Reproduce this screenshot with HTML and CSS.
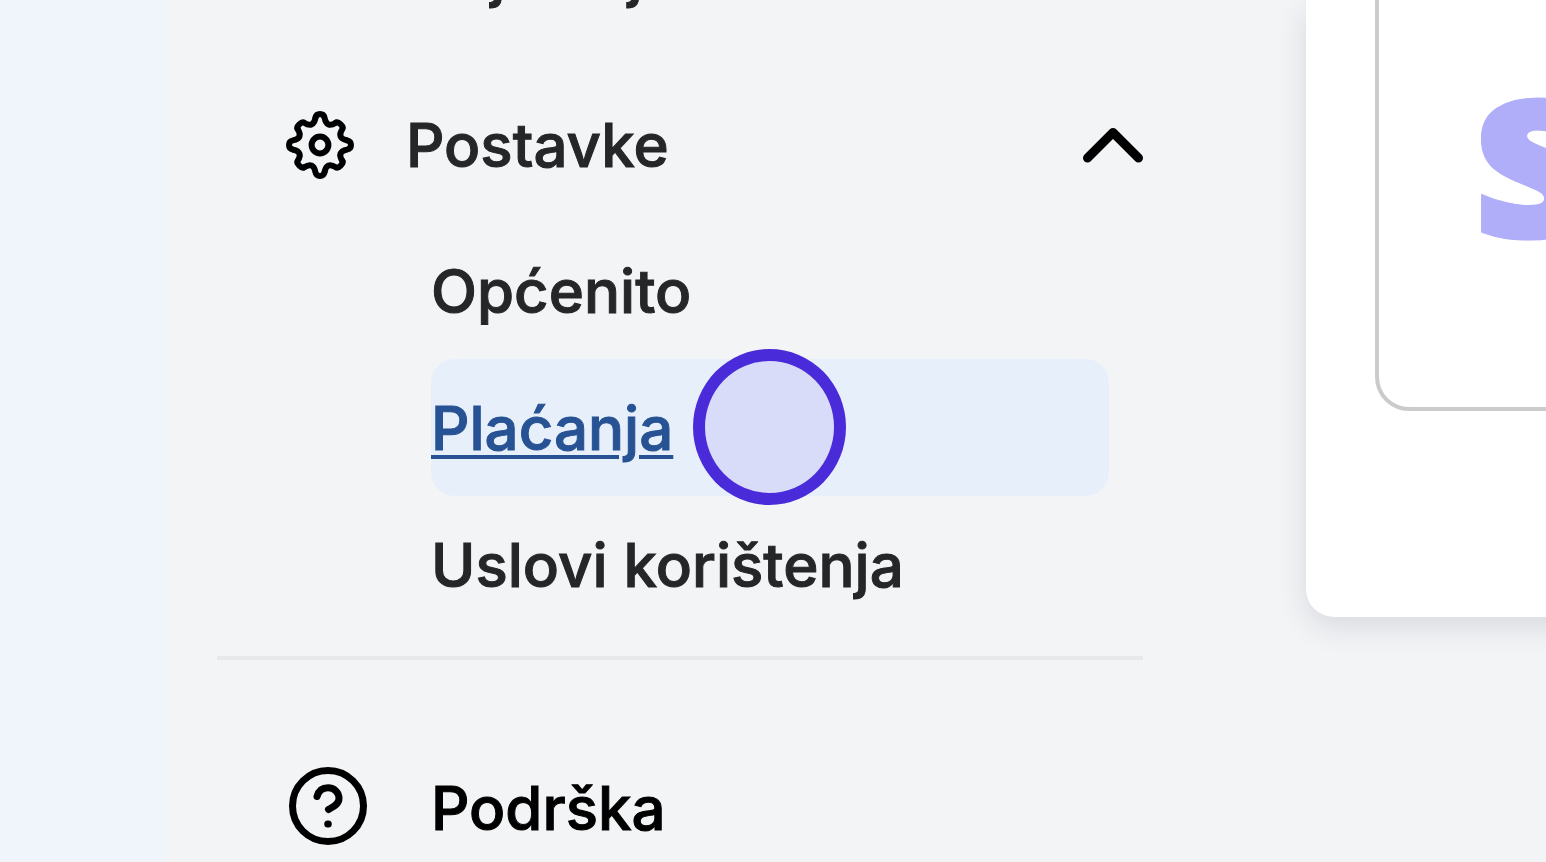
FILE: index.html
```html
<!DOCTYPE html>
<html lang="bs">
<head>
    <meta charset="UTF-8">
    <meta name="viewport" content="width=device-width, initial-scale=1.0">
    <title>Postavke</title>
    <link rel="stylesheet" href="styles.css">
</head>

<body>

<div class="page">
    <!-- Sidebar -->
    <nav class="sidebar">
        <a class="row" href="#"><span class="icon"></span>Izvještaji</a>

        <button class="row" type="button" aria-expanded="true">
            <svg class="icon" viewBox="-34 -34 68 68" aria-hidden="true">
                <defs>
                    <path id="tooth" d="M-4.6 -27C-3.6 -32.3 3.6 -32.3 4.6 -27C6 -20 9.9 -18.4 15.8 -22.3"/>
                    <path id="corner" d="M-4.6 -27C-4.2 -30 4.2 -30 4.6 -27C6 -20 9.9 -18.4 15.8 -22.3"/>
                </defs>
                <use href="#tooth"/>
                <use href="#corner" transform="rotate(45)"/>
                <use href="#tooth" transform="rotate(90)"/>
                <use href="#corner" transform="rotate(135)"/>
                <use href="#tooth" transform="rotate(180)"/>
                <use href="#corner" transform="rotate(225)"/>
                <use href="#tooth" transform="rotate(270)"/>
                <use href="#corner" transform="rotate(315)"/>
                <circle r="8.4"/>
            </svg>
            Postavke
            <svg class="chevron" viewBox="0 0 60 36" aria-hidden="true">
                <path d="M4.5 31L30 5.5L55.5 31"/>
            </svg>
        </button>

        <ul class="submenu">
            <li><a href="#">Općenito</a></li>
            <li class="active"><a href="#">Plaćanja</a><span class="pointer"></span></li>
            <li><a href="#">Uslovi korištenja</a></li>
        </ul>

        <hr>

        <a class="row support" href="#">
            <svg class="icon" viewBox="-39 -39 78 78" aria-hidden="true">
                <circle r="35.5"/>
                <path d="M-11 -9.5C-9.5 -15 -5.5 -18.2 0 -18.2C6.5 -18.2 11 -13.5 11 -7.5C11 -1.5 4.5 1 0.5 3.5"/>
                <path d="M-0.3 18H0.3"/>
            </svg>
            Podrška
        </a>
    </nav>

    <!-- Content -->
    <main class="card">
        <div class="provider"><span class="logo">s</span></div>
    </main>
</div>

</body>
</html>
```

FILE: styles.css
```css
* {
    box-sizing: border-box;
}
body {
    margin: 0;
    font-family: Inter, "Liberation Sans", sans-serif;
    font-size: 60px;
    font-weight: 500;
    line-height: 72px;
    color: #242628;
    background: #f2f4f6;
    -webkit-text-stroke: 1px;
    overflow: hidden;
}
.page {
    display: grid;
    grid-template-columns: 1141px 1fr;
    align-items: start;
    min-height: 100vh;
    border-left: 165px solid #f0f5fb;
}
/* scrolled so that the first row is almost out of view */
.sidebar {
    margin-top: -104px;
    padding: 0 163px 0 52px;
}
.row {
    display: flex;
    align-items: center;
    gap: 52px;
    width: 100%;
    height: 156px;
    padding: 0 0 0 69px;
    border: none;
    background: none;
    color: inherit;
    font: inherit;
    text-decoration: none;
    cursor: pointer;
}
button.row {
    margin-top: 14px;
    padding-top: 2px;
}
.icon {
    flex: none;
    width: 68px;
    height: 68px;
    fill: none;
    stroke: #000;
    stroke-width: 6;
    stroke-linecap: round;
    stroke-linejoin: round;
}
.chevron {
    width: 60px;
    height: 36px;
    margin-left: auto;
    fill: none;
    stroke: #000;
    stroke-width: 9;
    stroke-linecap: round;
    stroke-linejoin: round;
}
.submenu {
    list-style: none;
    margin: 0 34px 0 214px;
    padding: 0;
}
.submenu li {
    position: relative;
    display: flex;
    align-items: center;
    height: 137px;
    border-radius: 24px;
}
.submenu a {
    color: inherit;
    text-decoration: none;
}
.submenu .active {
    background: #e7effb;
    color: #275293;
}
.submenu .active a {
    text-decoration: underline;
    text-decoration-thickness: 4px;
    text-underline-offset: 5px;
}
.pointer {
    position: absolute;
    left: 262px;
    top: -10px;
    width: 153px;
    height: 156px;
    border: 12px solid #4a2bd9;
    border-radius: 50%;
    background: #d8dcf8;
}
hr {
    height: 4px;
    margin: 23px 0 70px;
    border: none;
    background: #e7e8ea;
}
.support {
    gap: 64px;
    padding-left: 72px;
    color: #000;
}
.support .icon {
    width: 78px;
    height: 78px;
    margin-bottom: 4px;
    stroke-width: 7;
}
/* runs past the right edge of the window */
.card {
    height: 617px;
    margin-right: -48px;
    padding-left: 69px;
    border-radius: 0 0 0 28px;
    background: #fff;
    box-shadow: 0 10px 30px rgba(30, 35, 50, 0.12);
}
.provider {
    height: 411px;
    padding: 0 0 0 92px;
    border: solid #cbcbcb;
    border-width: 0 0 4px 4px;
    border-radius: 0 0 0 34px;
}
.logo {
    font-family: "Open Sans", sans-serif;
    font-size: 248px;
    font-weight: 800;
    line-height: 284px;
    color: #b0adf9;
}
```
